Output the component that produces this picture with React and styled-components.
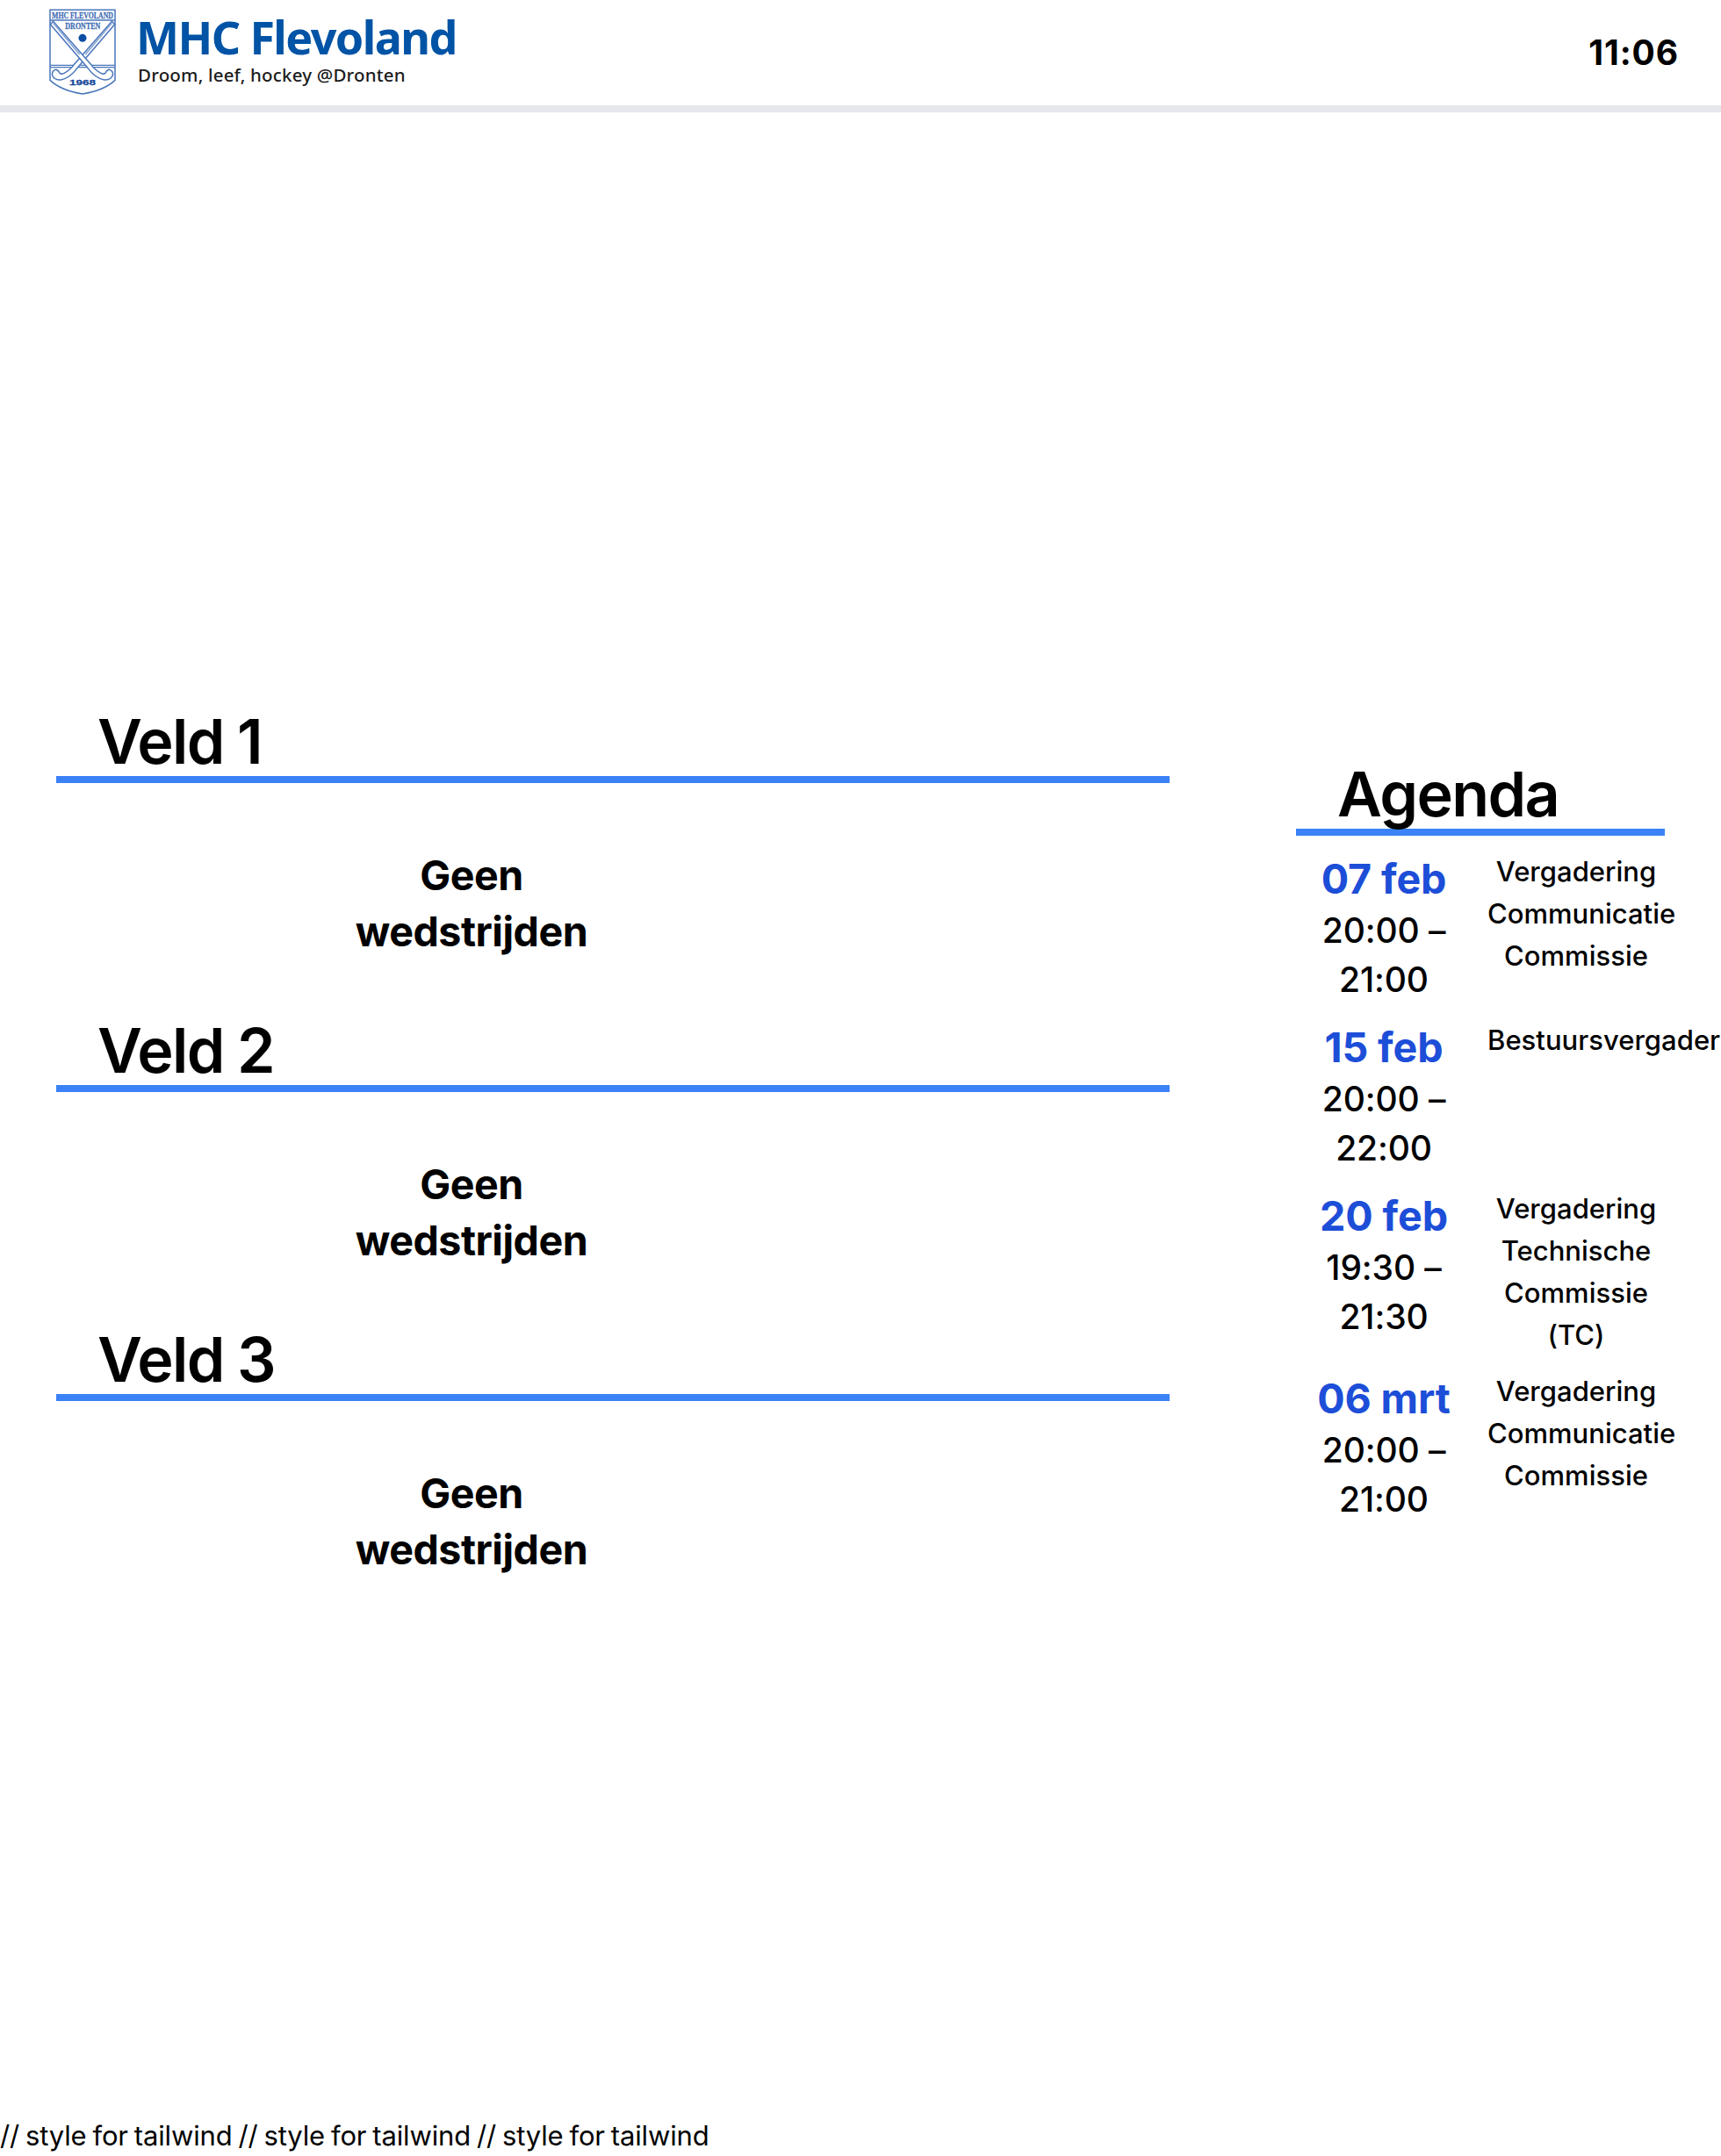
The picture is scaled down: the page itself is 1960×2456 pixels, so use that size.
import React from "react";
import styled, { createGlobalStyle } from "styled-components";

const GlobalStyle = createGlobalStyle`
  *, *::before, *::after { box-sizing: border-box; }
  html, body { margin: 0; overflow: hidden; background: #fff; }
  body {
    color: #000;
    font-family: Inter, "Liberation Sans", sans-serif;
    font-size: 31px;
    line-height: 48px;
  }
  h1, h2, h3, p { margin: 0; font-weight: inherit; font-size: inherit; }
`;

const Page = styled.div`
  display: flex;
  flex-direction: column;
  width: 100%;
  height: 2456px;
  overflow: hidden;
`;

const Header = styled.header`
  display: flex;
  align-items: center;
  justify-content: space-between;
  height: 128px;
  padding: 0 48px 0 40px;
  border-bottom: 8px solid #e5e7eb;
`;

const Brand = styled.div`
  display: flex;
  height: 120px;
`;

const Crest = styled.svg`
  display: block;
  width: 110px;
  height: 120px;
`;

const BrandText = styled.div`
  display: flex;
  flex-direction: column;
  gap: 4px;
  padding: 16px 0 0 5px;
  font-family: "Noto Sans", "Open Sans", sans-serif;
  white-space: nowrap;
`;

const ClubName = styled.h1`
  color: #0053a5;
  font-size: 52px;
  font-weight: 700;
  line-height: 52px;
  letter-spacing: -1.58px;
`;

const Tagline = styled.p`
  padding-left: 2px;
  color: #1c1c1c;
  font-size: 20.5px;
  font-weight: 500;
  line-height: 26px;
  letter-spacing: 0.19px;
`;

const Clock = styled.time`
  font-size: 39px;
  font-weight: 700;
  line-height: 56px;
  letter-spacing: 0.9px;
`;

const Main = styled.main`
  display: flex;
  flex: 1;
  align-items: flex-start;
  gap: 144px;
  padding: 676px 64px 0;
`;

const Fields = styled.div`
  width: 1268px;
`;

const Field = styled.section`
  padding-bottom: 63px;
`;

const Heading = styled.h2`
  padding: 2px 0 0 47px;
  border-bottom: 8px solid #3b82f6;
  font-size: 70px;
  font-weight: 600;
  line-height: 78px;
  letter-spacing: -1.6px;
  word-spacing: -1px;
`;

const Empty = styled.p`
  width: 320px;
  margin: 73px 0 0 313px;
  font-size: 46.6px;
  font-weight: 700;
  line-height: 64px;
  letter-spacing: -0.5px;
  text-align: center;
`;

const Agenda = styled.aside`
  width: 420px;
  padding-top: 60px;
`;

const Events = styled.div`
  display: flex;
  flex-direction: column;
  gap: 16px;
  padding-top: 16px;
`;

const Event = styled.article`
  display: grid;
  grid-template-columns: repeat(2, minmax(0, 1fr));
  gap: 16px;
  font-weight: 500;
  text-align: center;
`;

const When = styled.div`
  padding: 0 25px 0 23px;
`;

const Day = styled.h3`
  padding-top: 2px;
  color: #1d4ed8;
  font-size: 46.6px;
  font-weight: 700;
  line-height: 62px;
  letter-spacing: -0.1px;
`;

const Hours = styled.p`
  font-size: 39px;
  line-height: 56px;
  letter-spacing: -0.1px;
`;

const Title = styled.p`
  margin: 1px 0 -1px;
  letter-spacing: 0.02px;
`;

const Footer = styled.footer`
  height: 48px;
  padding-top: 1px;
  line-height: 48px;
  letter-spacing: -0.15px;
  word-spacing: -1.6px;
`;

const fields = ["Veld 1", "Veld 2", "Veld 3"];

const events = [
  { day: "07 feb", hours: "20:00 – 21:00", title: "Vergadering Communicatie Commissie" },
  { day: "15 feb", hours: "20:00 – 22:00", title: "Bestuursvergadering" },
  { day: "20 feb", hours: "19:30 – 21:30", title: "Vergadering Technische Commissie (TC)" },
  { day: "06 mrt", hours: "20:00 – 21:00", title: "Vergadering Communicatie Commissie" },
];

function ClubCrest() {
  return (
    <Crest viewBox="0 0 330 360" fill="none" stroke="#4a76bb" strokeWidth="4.5">
      <path d="M51 34 H273 V274 Q236 309 162 321 Q88 309 51 274 Z" fill="#fff" />
      <path d="M51 69 H273" />
      <path d="M51 223 H273 M51 230 H273" strokeWidth="3.5" />
      <path d="M262 73 L272 83 L147 229 Q119 267 88 273 Q66 274 59 258 Q56 243 69 238 Q78 237 82 247 Q87 256 99 250 Q120 240 135 218 Z" fill="#fff" />
      <path d="M62 73 L52 83 L177 229 Q205 267 236 273 Q258 274 265 258 Q268 243 255 238 Q246 237 242 247 Q237 256 225 250 Q204 240 189 218 Z" fill="#fff" />
      <path d="M62 79 L152 186 M262 79 L172 186" strokeWidth="5" stroke="#86a4d3" />
      <circle cx="162" cy="130" r="13.5" fill="#0b4da2" stroke="none" />
      <g stroke="#3f6cb4" strokeWidth="0.8" fill="#3f6cb4" textAnchor="middle" fontFamily="'Liberation Serif', serif" fontWeight="700">
        <text x="162" y="62" fontSize="32" textLength="210" lengthAdjust="spacingAndGlyphs">MHC FLEVOLAND</text>
        <text x="163" y="100" fontSize="33" textLength="120" lengthAdjust="spacingAndGlyphs">DRONTEN</text>
        <text x="162" y="292" fontSize="29" fill="#17479b" stroke="#17479b" fontFamily="'Liberation Sans', sans-serif" textLength="90" lengthAdjust="spacingAndGlyphs">1968</text>
      </g>
    </Crest>
  );
}

export default function App() {
  return (
    <>
      <GlobalStyle />
      <Page>
        <Header>
          <Brand>
            <ClubCrest />
            <BrandText>
              <ClubName>MHC Flevoland</ClubName>
              <Tagline>Droom, leef, hockey @Dronten</Tagline>
            </BrandText>
          </Brand>
          <Clock>11:06</Clock>
        </Header>
        <Main>
          <Fields>
            {fields.map((name) => (
              <Field key={name}>
                <Heading>{name}</Heading>
                <Empty>Geen wedstrijden</Empty>
              </Field>
            ))}
          </Fields>
          <Agenda>
            <Heading>Agenda</Heading>
            <Events>
              {events.map((event) => (
                <Event key={event.day}>
                  <When>
                    <Day>{event.day}</Day>
                    <Hours>{event.hours}</Hours>
                  </When>
                  <Title>{event.title}</Title>
                </Event>
              ))}
            </Events>
          </Agenda>
        </Main>
        <Footer>// style for tailwind // style for tailwind // style for tailwind</Footer>
      </Page>
    </>
  );
}
